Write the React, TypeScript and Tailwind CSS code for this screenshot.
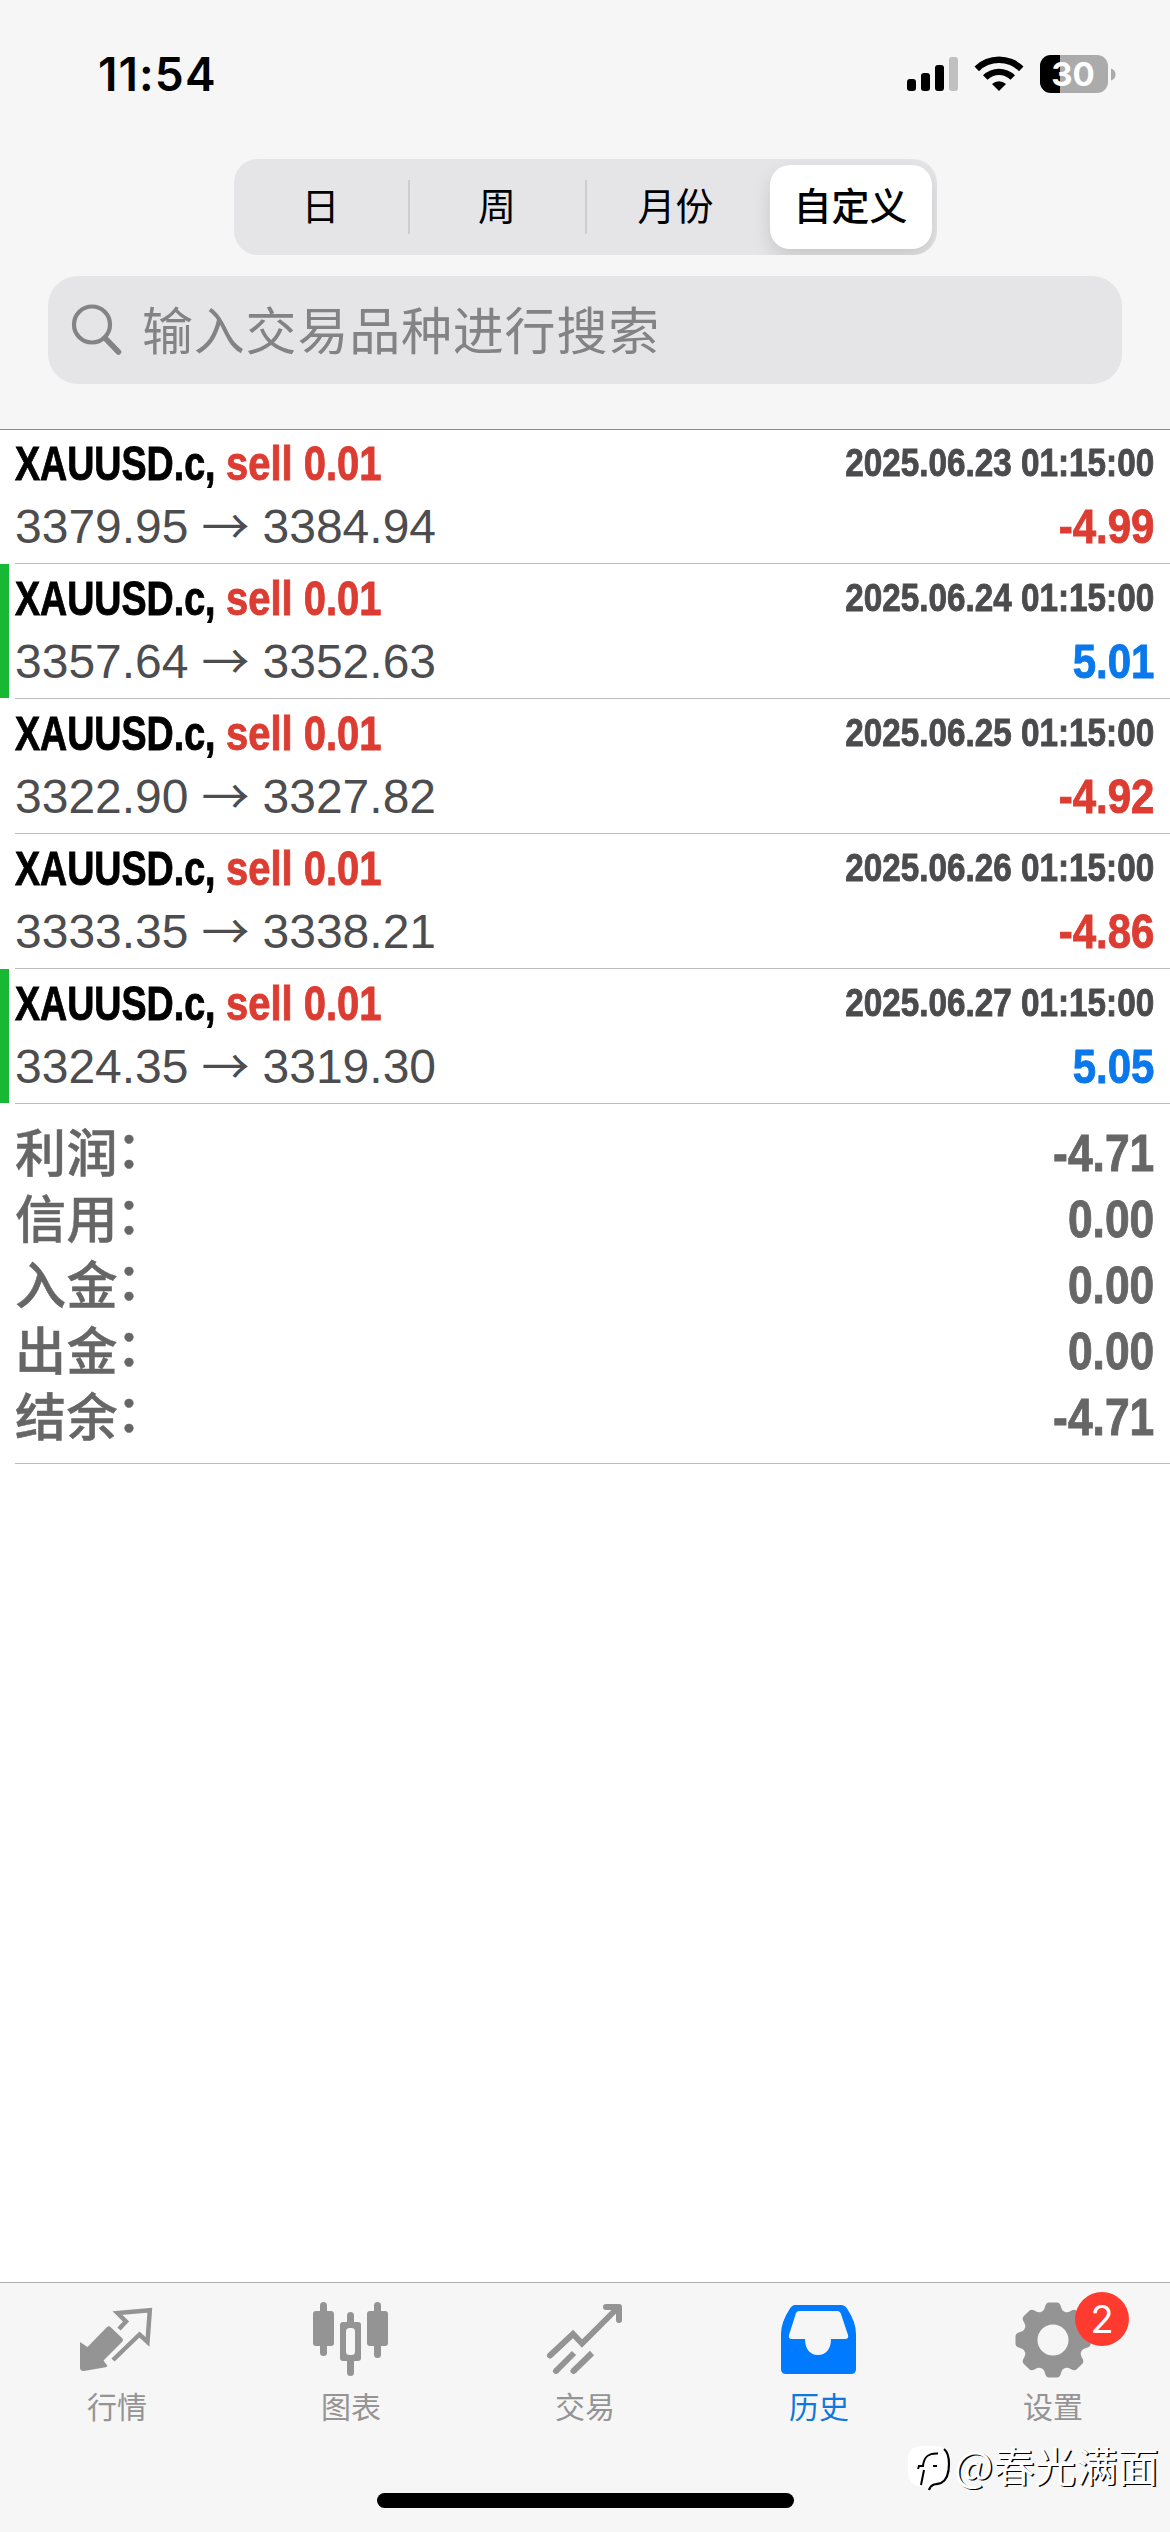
import React from "react";

const CJK = "font-['Noto_Sans_CJK_SC',sans-serif]";
const SANS = "font-['Liberation_Sans',sans-serif]";
const HEAVY = "font-bold [-webkit-text-stroke:0.9px_currentColor]";

type Deal = { open: string; close: string; time: string; profit: string; win: boolean };

const deals: Deal[] = [
  { open: "3379.95", close: "3384.94", time: "2025.06.23 01:15:00", profit: "-4.99", win: false },
  { open: "3357.64", close: "3352.63", time: "2025.06.24 01:15:00", profit: "5.01", win: true },
  { open: "3322.90", close: "3327.82", time: "2025.06.25 01:15:00", profit: "-4.92", win: false },
  { open: "3333.35", close: "3338.21", time: "2025.06.26 01:15:00", profit: "-4.86", win: false },
  { open: "3324.35", close: "3319.30", time: "2025.06.27 01:15:00", profit: "5.05", win: true },
];

const summary = [
  ["利润", "-4.71"],
  ["信用", "0.00"],
  ["入金", "0.00"],
  ["出金", "0.00"],
  ["结余", "-4.71"],
];

function StatusBar() {
  return (
    <div className="flex h-[159px] items-start justify-between pl-[98px] pr-[54px]">
      <span className="mt-[46px] font-['Inter',sans-serif] text-[46px] font-semibold leading-[56px] tracking-[1.1px]">11:54</span>
      <svg className="mt-[50px]" width="210" height="48" viewBox="906 50 210 48">
        <rect x="907" y="79" width="9" height="12" rx="3" />
        <rect x="921" y="73" width="9" height="18" rx="3" />
        <rect x="935" y="65" width="9" height="26" rx="3" />
        <rect x="949" y="57" width="9" height="34" rx="3" fill="#c0c0c0" />
        <path d="M974.5 66.500A35 35 0 0 1 1023.500 66.500L1019 71.200A28.300 28.300 0 0 0 979 71.200Z" />
        <path d="M983 75.200A23 23 0 0 1 1015 75.200L1010.500 79.700A16.500 16.500 0 0 0 987.500 79.700Z" />
        <path d="M992 84A10.500 10.500 0 0 1 1006 84L999 91Z" />
        <rect x="1040" y="55" width="68" height="38" rx="11" fill="#ababab" />
        <path d="M1060 55H1051A11 11 0 0 0 1040 66V82A11 11 0 0 0 1051 93H1060Z" />
        <path d="M1111 68.500Q1115.500 70 1115.500 74.500T1111 80.500Z" fill="#ababab" />
        <text x="1073" y="86" textAnchor="middle" fill="#fff" className="font-['Inter',sans-serif] text-[33px] font-bold">30</text>
      </svg>
    </div>
  );
}

function Segments() {
  return (
    <div className={`mx-auto flex h-24 w-[703px] overflow-hidden rounded-[24px] bg-[#e5e5e7] text-[38px] ${CJK}`}>
      <div className="flex w-[174px] items-center justify-center pb-[7px]">日</div>
      <div className="my-[21px] w-[2px] bg-[#cdcdcf]" />
      <div className="flex w-[175px] items-center justify-center pb-[7px]">周</div>
      <div className="my-[21px] w-[2px] bg-[#cdcdcf]" />
      <div className="flex w-[176px] items-center justify-center pb-[7px] pl-[2px]">月份</div>
      <div className="my-[6px] ml-[7px] flex w-[162px] items-center justify-center rounded-[20px] bg-white pb-[7px] font-medium shadow-[0_8px_18px_rgba(0,0,0,0.13)]">
        自定义
      </div>
    </div>
  );
}

function Search() {
  return (
    <div className="mx-12 mt-[21px] flex h-[108px] items-center rounded-[30px] bg-[#e5e5e7] pl-[22px] text-[#838387]">
      <svg width="54" height="54" viewBox="0 0 54 54" fill="none" stroke="currentColor" strokeWidth="4.200">
        <circle cx="22" cy="21.500" r="18" />
        <path d="M35 35L48.500 49" strokeWidth="5.500" strokeLinecap="round" />
      </svg>
      <span className={`mb-1 ml-[18px] text-[51px] leading-[104px] tracking-[0.8px] ${CJK}`}>输入交易品种进行搜索</span>
    </div>
  );
}

function DealRow({ d }: { d: Deal }) {
  return (
    <div className="flex h-[135px]">
      <div className={d.win ? "mb-px w-[9px] bg-[#17b834]" : "w-[9px]"} />
      <div className="ml-[6px] flex flex-1 flex-col border-b border-[#bcbcbe] pr-4">
        <div className={`flex h-[65px] items-end ${HEAVY} ${SANS}`}>
          <span className="w-[211px] origin-left scale-x-[0.783] whitespace-nowrap text-[48px] leading-[60px]">XAUUSD.c,</span>
          <span className="w-[200px] origin-left scale-x-[0.832] whitespace-nowrap text-[48px] leading-[60px] text-[#dc3c31]">sell 0.01</span>
          <span className="ml-auto origin-right scale-x-[0.853] text-[39px] leading-[63px] text-[#4b4b4d]">{d.time}</span>
        </div>
        <div className="flex h-[66px] items-center justify-between">
          <span className={`flex text-[48px] leading-[66px] text-[#4d4d4f] ${SANS}`}>
            {d.open}
            <span className={`mx-[13px] -mt-1 ${CJK}`}>→</span>
            {d.close}
          </span>
          <span className={`origin-right scale-x-[0.875] text-[48px] leading-[66px] ${HEAVY} ${SANS} ${d.win ? "text-[#0a78ea]" : "text-[#dc3c31]"}`}>
            {d.profit}
          </span>
        </div>
      </div>
    </div>
  );
}

function Summary() {
  return (
    <div className="ml-[15px] h-[360px] border-b border-[#bcbcbe] pr-4 pt-[17px] text-[51px] text-[#666]">
      {summary.map(([k, v]) => (
        <div key={k} className="flex h-[66px] items-center justify-between">
          <span className={`-mt-[9px] flex font-medium leading-[66px] tracking-[0.6px] [-webkit-text-stroke:0.5px_currentColor] ${CJK}`}>
            {k}
            <span className="-ml-[2px] -mt-1">：</span>
          </span>
          <span className={`origin-right scale-x-[0.87] leading-[66px] ${HEAVY} ${SANS}`}>{v}</span>
        </div>
      ))}
    </div>
  );
}

function QuotesIcon() {
  return (
    <svg width="80" height="80" viewBox="77 2300 80 80">
      <path d="M80 2342L87.500 2347L107 2327Q109 2325.500 111 2327.500L122 2338Q124 2340 122 2342L103.500 2360.500L107.500 2366Q107 2367 105.500 2367.300L84 2371Q80 2371 80 2368Z" fill="#949494" />
      <path d="M119 2329L126 2321.500L117.500 2313L149.800 2310.300L147.500 2342L139.500 2334.500L113 2360" fill="none" stroke="#949494" strokeWidth="4.500" />
    </svg>
  );
}

function ChartIcon() {
  return (
    <svg width="80" height="80" viewBox="311 2300 80 80" fill="#949494">
      <rect x="313" y="2311" width="21" height="35" rx="3" />
      <rect x="320" y="2302" width="7" height="54" rx="3.500" />
      <rect x="367" y="2311" width="21" height="35" rx="3" />
      <rect x="374" y="2302" width="7" height="56" rx="3.500" />
      <rect x="347" y="2312" width="7" height="64" rx="3.500" />
      <rect x="340" y="2322" width="21" height="39" rx="3" />
      <rect x="346" y="2328" width="9" height="27" rx="3.500" fill="#f6f6f6" />
    </svg>
  );
}

function TradeIcon() {
  return (
    <svg width="80" height="80" viewBox="545 2300 80 80" fill="none" stroke="#949494" strokeWidth="6" strokeLinecap="round">
      <path d="M550 2355.500L573 2334L582 2343.500L616 2309.500" />
      <path d="M606 2307H619V2320" strokeLinejoin="round" />
      <path d="M612 2306H620V2314Z" fill="#949494" stroke="none" />
      <path d="M556 2371L574 2353M573.500 2371L592 2353" strokeLinecap="butt" />
      <path d="M556 2371L556.100 2370.900M573.500 2371L573.600 2370.900" />
    </svg>
  );
}

function HistoryIcon() {
  return (
    <svg width="80" height="80" viewBox="779 2300 80 80">
      <path fillRule="evenodd" fill="#007aff" d="M795 2305H841Q845 2305 847 2308.500Q856 2322 856 2334V2369Q856 2374 851 2374H786Q781 2374 781 2369V2334Q781 2322 790 2308.500Q792 2305 795 2305ZM799 2311Q797 2311 796 2313L789 2335Q788 2339 792 2339H805C805 2349 810 2355 818 2355S831 2349 831 2339H845Q849 2339 848 2335L841 2314Q840 2311 837 2311Z" />
    </svg>
  );
}

function GearIcon() {
  const teeth = [0, 45, 90, 135, 180, 225, 270, 315];
  return (
    <svg width="80" height="80" viewBox="-40 -40 80 80" fill="#949494">
      <mask id="hub">
        <rect x="-40" y="-40" width="80" height="80" fill="#fff" />
        <circle r="15.500" fill="#000" />
      </mask>
      <g mask="url(#hub)">
        <circle r="29.500" />
        {teeth.map((a) => (
          <path key={a} transform={`rotate(${a})`} d="M-12 -28Q-9 -29 -8 -33Q-7 -37.500 -4 -37.500H4Q7 -37.500 8 -33Q9 -29 12 -28V-20H-12Z" />
        ))}
      </g>
    </svg>
  );
}

const tabs = [
  { label: "行情", icon: <QuotesIcon /> },
  { label: "图表", icon: <ChartIcon /> },
  { label: "交易", icon: <TradeIcon /> },
  { label: "历史", icon: <HistoryIcon />, active: true },
  { label: "设置", icon: <GearIcon />, badge: "2" },
];

function TabBar() {
  return (
    <div className="relative h-[250px] border-t border-[#aeaeae] bg-[#f6f6f6]">
      <div className="grid grid-cols-5 pt-[17px]">
        {tabs.map((t) => (
          <div key={t.label} className="relative flex flex-col items-center">
            {t.icon}
            <span className={`mt-[3px] text-[30px] leading-[44px] ${CJK} ${t.active ? "text-[#1277dd]" : "text-[#949494]"}`}>{t.label}</span>
            {t.badge && (
              <span className="absolute left-[139px] top-[-8px] flex size-[54px] items-center justify-center rounded-full bg-[#ff3b30] font-['Inter',sans-serif] text-[38px] text-white">
                {t.badge}
              </span>
            )}
          </div>
        ))}
      </div>
      <div className="absolute left-[377px] top-[210px] h-[15px] w-[417px] rounded-full bg-black" />
      <div className="absolute left-[908px] top-[151px] flex items-center">
        <svg className="mt-[10px]" width="46" height="50" viewBox="0 0 46 50" fill="none">
          <path d="M14 2H28Q41 2 41 18Q41 36 30 40L21 46L19 42H12Q0 42 0 28V16Q0 2 14 2Z" fill="#fff" />
          <path d="M36 5Q41 9 41 20Q41 35 33 39Q30 40 26 40.500Q22 42 21 46" stroke="#000" strokeWidth="2.200" />
          <path d="M13 41L16 26M10 25L11 22H15C16 12 21 9 30 9.500M25 22H29" stroke="#000" strokeWidth="2" />
        </svg>
        <span className={`text-[41.4px] leading-[50px] text-white [text-shadow:1.5px_1px_0_#000] ${CJK}`}>@春光满面</span>
      </div>
    </div>
  );
}

export default function App() {
  return (
    <div className="flex h-[2532px] w-[1170px] flex-col overflow-hidden bg-white text-black">
      <header className="h-[430px] border-b border-[#8b8b8d] bg-[#f6f6f6]">
        <StatusBar />
        <Segments />
        <Search />
      </header>
      <main className="-mt-px flex-1">
        {deals.map((d) => (
          <DealRow key={d.time} d={d} />
        ))}
        <Summary />
      </main>
      <TabBar />
    </div>
  );
}
